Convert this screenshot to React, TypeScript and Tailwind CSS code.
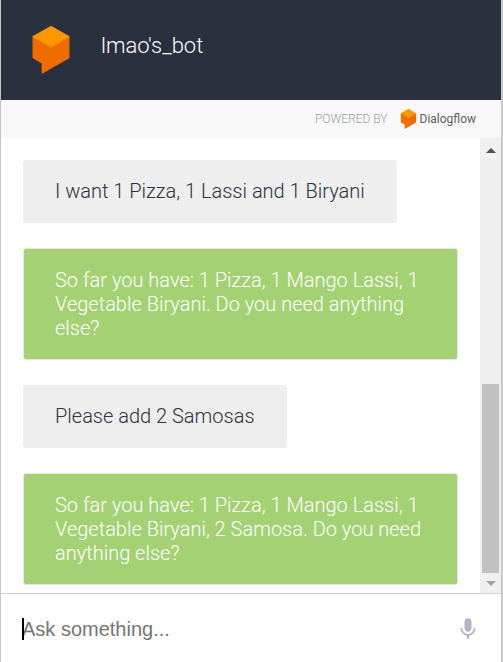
import React from "react";

type Message = { from: "user" | "bot"; text: string };

const messages: Message[] = [
  { from: "user", text: "I want 1 Pizza, 1 Lassi and 1 Biryani" },
  {
    from: "bot",
    text: "So far you have: 1 Pizza, 1 Mango Lassi, 1 Vegetable Biryani. Do you need anything else?",
  },
  { from: "user", text: "Please add 2 Samosas" },
  {
    from: "bot",
    text: "So far you have: 1 Pizza, 1 Mango Lassi, 1 Vegetable Biryani, 2 Samosa. Do you need anything else?",
  },
];

function DialogflowMark({ className }: { className: string }) {
  return (
    <svg viewBox="0 0 38 48" className={className} aria-hidden="true">
      <path
        d="M0.500 10.500 L19 5 L37.500 10.500 V31.200 Q37.500 32 36.800 32.400 L11 47.300 Q9.700 47.900 9.700 46.800 V37.400 L1.200 32.400 Q0.500 32 0.500 31.200 Z"
        fill="#ef6c00"
      />
      <path
        d="M0.500 10.800 Q0.500 10.400 1 10.100 L18.200 0.200 Q19 -0.200 19.800 0.200 L37 10.100 Q37.500 10.400 37.500 10.800 L19 21.400 Z"
        fill="#ff9800"
      />
    </svg>
  );
}

function Bubble({ from, text }: Message) {
  const look =
    from === "user"
      ? "self-start border-[#eeeeee] bg-[#eeeeee] pt-[18px] text-[#2b313f]"
      : "self-stretch border-[#e6e6e6] bg-[#a5d175] pt-[19px] text-white";
  return (
    <li className={`rounded-[3px] border px-[31px] pb-[19px] text-xl/6 font-light ${look}`}>
      {text}
    </li>
  );
}

function ScrollBar() {
  return (
    <div className="flex w-[21px] shrink-0 flex-col bg-[#f0f0f0]">
      <button type="button" aria-label="Scroll up" className="flex h-6 items-center justify-center">
        <svg viewBox="0 0 10 5" className="h-[5px] w-[10px]">
          <path d="M5 0 L10 5 H0 Z" fill="#505050" />
        </svg>
      </button>
      <div className="flex min-h-0 flex-1 flex-col justify-end px-0.5">
        <div className="h-[189px] bg-[#c1c1c1]" />
      </div>
      <button type="button" aria-label="Scroll down" className="flex h-5 items-center justify-center">
        <svg viewBox="0 0 10 5" className="h-[5px] w-[10px]">
          <path d="M0 0 H10 L5 5 Z" fill="#a3a3a3" />
        </svg>
      </button>
    </div>
  );
}

export default function App() {
  return (
    <div className="flex h-screen flex-col border-l border-r-2 border-l-[#c4c4c4] border-r-[#c9c9c9] bg-white font-['Roboto',sans-serif]">
      <header className="flex h-[100px] shrink-0 items-center gap-[31px] bg-[#2b303f] pl-[31px]">
        <DialogflowMark className="h-12 w-[38px]" />
        <h1 className="pb-2 text-[22px]/7 font-light text-white">lmao's_bot</h1>
      </header>

      <div className="flex h-[38px] shrink-0 items-center justify-end bg-[#f8f8f8] pr-[25px]">
        <span className="text-xs font-light text-[#9a9eaa]">POWERED BY</span>
        <a href="#dialogflow" className="ml-3 flex items-center gap-[3px]">
          <DialogflowMark className="h-5 w-[17px]" />
          <span className="text-xs font-normal text-[#616161]">Dialogflow</span>
        </a>
      </div>

      <main className="flex min-h-0 flex-1">
        <ul className="flex min-w-0 flex-1 flex-col gap-[25px] overflow-hidden px-[22px] pt-[22px]">
          {messages.map((m) => (
            <Bubble key={m.text} {...m} />
          ))}
        </ul>
        <ScrollBar />
      </main>

      <form
        className="flex h-[69px] shrink-0 items-center border-t border-[#cfcfcf] pt-0.5 pr-5 pl-[21px]"
        onSubmit={(e) => e.preventDefault()}
      >
        <div className="relative flex min-w-0 flex-1 items-center">
          <input
            type="text"
            aria-label="Ask something"
            placeholder="Ask something..."
            className="min-w-0 flex-1 font-['Liberation_Sans',Arial,sans-serif] text-xl text-black outline-none placeholder:text-[#757575]"
          />
          <span className="absolute left-0 h-[22px] w-0.5 bg-black" />
        </div>
        <button type="button" aria-label="Speak">
          <svg viewBox="0 0 24 24" className="h-[26px] w-[26px]" fill="#b2b6c3">
            <path d="M12 14.500c1.800 0 3.200-1.400 3.200-3.200V5.200C15.200 3.400 13.800 2 12 2S8.800 3.400 8.800 5.200v6.100c0 1.800 1.400 3.200 3.200 3.200z" />
            <path d="M17.300 11c0 3-2.540 5.600-5.300 5.600S6.700 14 6.700 11H5c0 3.410 2.720 6.730 6 7.220V21h2v-2.780c3.280-.49 6-3.810 6-7.220h-1.700z" />
          </svg>
        </button>
      </form>
    </div>
  );
}
